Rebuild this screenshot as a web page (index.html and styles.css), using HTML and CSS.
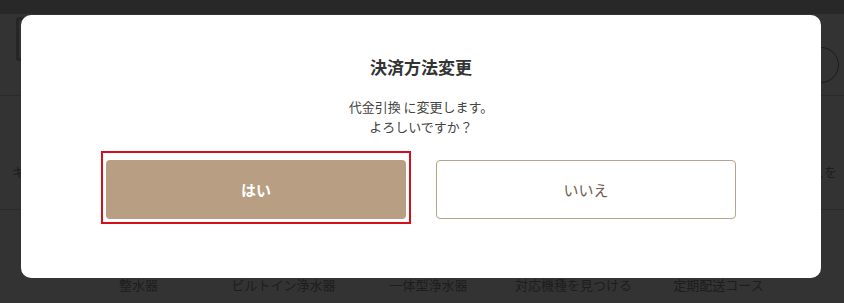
FILE: index.html
```html
<!DOCTYPE html>
<html lang="ja">

<head>
    <meta charset="UTF-8">
    <meta name="viewport" content="width=device-width, initial-scale=1.0">
    <title>決済方法変更</title>
    <link rel="stylesheet" href="styles.css">
</head>

<body>
<div class="bg">
    <div class="bg-top"></div>
    <div class="bg-search">
        <div class="bg-input"></div>
        <div class="bg-circle"></div>
    </div>
    <div class="bg-row">
        <span class="bg-left">キ</span>
        <span class="bg-right">スを</span>
    </div>
    <ul class="bg-nav">
        <li>整水器</li>
        <li>ビルトイン浄水器</li>
        <li>一体型浄水器</li>
        <li>対応機種を見つける</li>
        <li>定期配送コース</li>
    </ul>
</div>

<div class="overlay">
    <div class="modal">
        <h2 class="modal-title">決済方法変更</h2>
        <p class="modal-text">代金引換 に変更します。<br>よろしいですか？</p>
        <div class="modal-btns">
            <span class="focus">
                <button type="button" class="btn btn-yes">はい</button>
            </span>
            <button type="button" class="btn btn-no">いいえ</button>
        </div>
    </div>
</div>
</body>

</html>
```

FILE: styles.css
```css
body {
    margin: 0;
    background-color: #333333;
    font-family: "Noto Sans CJK JP", "Noto Sans", sans-serif;
    overflow: hidden;
}

.bg {
    height: 303px;
    color: #1d1d1d;
}

.bg-top {
    height: 14px;
    background-color: #282828;
}

.bg-search {
    display: flex;
    justify-content: space-between;
    align-items: flex-start;
    height: 81px;
    border-bottom: 1px solid #2a2a2a;
}

.bg-input {
    margin: 3px 0 0 16px;
    width: 700px;
    height: 38px;
    border: 3px solid #262626;
    border-radius: 3px;
}

.bg-circle {
    margin: 33px 5px 0 0;
    width: 34px;
    height: 34px;
    border: 1px solid #1c1c1c;
    border-radius: 50%;
}

.bg-row {
    display: flex;
    justify-content: space-between;
    height: 113px;
    border-bottom: 1px solid #2a2a2a;
    font-size: 13px;
    line-height: 20px;
    white-space: nowrap;
}

.bg-left {
    margin: 66px 0 0 12px;
}

.bg-right {
    margin: 66px 7px 0 0;
}

.bg-nav {
    display: flex;
    margin: 0;
    padding: 65px 0 0 66px;
    list-style: none;
    font-size: 13px;
    line-height: 20px;
}

.bg-nav li {
    width: 145px;
    text-align: center;
    white-space: nowrap;
}

.overlay {
    position: fixed;
    inset: 0;
    display: flex;
    justify-content: center;
    align-items: flex-start;
    padding-right: 2px;
}

.modal {
    margin-top: 15px;
    width: 800px;
    height: 263px;
    box-sizing: border-box;
    padding-top: 40px;
    background-color: #ffffff;
    border-radius: 10px;
    text-align: center;
}

.modal-title {
    margin: 0;
    font-size: 17px;
    line-height: 24px;
    font-weight: bold;
    color: #333333;
}

.modal-text {
    margin: 18px 0 0;
    font-size: 13px;
    line-height: 20px;
    color: #444444;
}

.modal-btns {
    display: flex;
    justify-content: center;
    gap: 30px;
    margin-top: 23px;
}

.focus {
    position: relative;
    display: flex;
}

.focus::after {
    content: "";
    position: absolute;
    top: -9px;
    left: -5px;
    right: -5px;
    bottom: -5px;
    border: 2px solid #d3101c;
}

.btn {
    width: 300px;
    height: 59px;
    box-sizing: border-box;
    border-radius: 4px;
    font-family: "Noto Sans CJK JP", "Noto Sans", sans-serif;
    font-size: 15px;
    cursor: pointer;
}

.btn-yes {
    border: none;
    background-color: #b89e82;
    color: #ffffff;
    font-weight: bold;
}

.btn-no {
    border: 1px solid #b5a58c;
    background-color: #ffffff;
    color: #6e5e4d;
}
```
